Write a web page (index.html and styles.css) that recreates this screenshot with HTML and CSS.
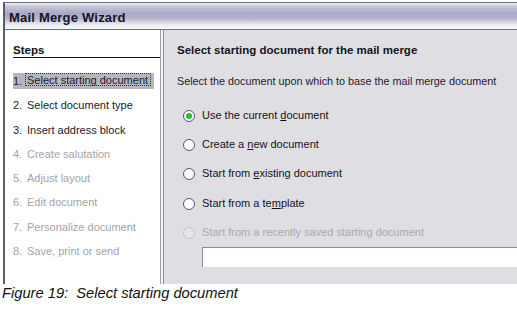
FILE: index.html
```html
<!DOCTYPE html>
<html lang="en">
<head>
  <meta charset="UTF-8">
  <title>Mail Merge Wizard</title>
  <link rel="stylesheet" href="styles.css">
</head>
<body>
  <div class="figure">
    <div class="window">
      <div class="titlebar">Mail Merge Wizard</div>
      <div class="main">
        <div class="steps">
          <div class="steps-title">Steps</div>
          <ul class="step-list">
            <li class="step current"><span class="num">1.</span><span class="label">Select starting document</span></li>
            <li class="step"><span class="num">2.</span><span class="label">Select document type</span></li>
            <li class="step"><span class="num">3.</span><span class="label">Insert address block</span></li>
            <li class="step disabled"><span class="num">4.</span><span class="label">Create salutation</span></li>
            <li class="step disabled"><span class="num">5.</span><span class="label">Adjust layout</span></li>
            <li class="step disabled"><span class="num">6.</span><span class="label">Edit document</span></li>
            <li class="step disabled"><span class="num">7.</span><span class="label">Personalize document</span></li>
            <li class="step disabled"><span class="num">8.</span><span class="label">Save, print or send</span></li>
          </ul>
        </div>
        <div class="divider"></div>
        <div class="content">
          <h2>Select starting document for the mail merge</h2>
          <p class="intro">Select the document upon which to base the mail merge document</p>
          <div class="options">
            <div class="option"><span class="radio checked"></span><span>Use the current <u>d</u>ocument</span></div>
            <div class="option"><span class="radio"></span><span>Create a <u>n</u>ew document</span></div>
            <div class="option"><span class="radio"></span><span>Start from <u>e</u>xisting document</span></div>
            <div class="option"><span class="radio"></span><span>Start from a te<u>m</u>plate</span></div>
            <div class="option disabled"><span class="radio"></span><span>Start from a recently saved starting document</span></div>
            <div class="field"></div>
          </div>
        </div>
      </div>
    </div>
    <div class="caption">Figure 19:&nbsp; Select starting document</div>
  </div>
</body>
</html>
```

FILE: styles.css
```css
body {
  margin: 0;
  background: #fff;
  font-family: "Liberation Sans", Arial, sans-serif;
  color: #111;
  overflow: hidden;
}
.figure {
  padding-top: 2px;
  padding-left: 3px;
}
.window {
  width: 530px;
  height: 282px;
  border-top: 1px solid #6e6d7e;
  border-left: 2px solid #5c5b6e;
  display: flex;
  flex-direction: column;
  box-sizing: border-box;
}
.titlebar {
  height: 27px;
  box-sizing: border-box;
  padding: 7px 0 0 4px;
  font-size: 13px;
  font-weight: bold;
  letter-spacing: 0.2px;
  color: #141428;
  background: linear-gradient(#eeeef3 0%, #c4c3d6 15%, #aaa9c4 40%, #b5b4cb 60%, #e8eaee 82%, #fafafa 100%);
  border-bottom: 1px solid #6d6c80;
}
.main {
  flex: 1;
  display: flex;
}
.steps {
  width: 155px;
  background: #fff;
  padding: 14px 0 0 8px;
  box-sizing: border-box;
}
.steps-title {
  font-size: 11.5px;
  font-weight: bold;
  color: #111;
  border-bottom: 1px solid #111;
  padding-bottom: 1px;
  margin-right: -6px;
}
.step-list {
  list-style: none;
  margin: 15px 0 0;
  padding: 0;
}
.step {
  font-size: 11px;
  height: 24.3px;
  display: flex;
  align-items: flex-start;
  color: #1a1a30;
}
.step .num {
  width: 14px;
  padding-top: 2px;
}
.step .label {
  padding-top: 2px;
}
.step.current {
  background: #b7b6be;
  height: 16px;
  width: 141px;
  margin-bottom: 8.3px;
}
.step.current .label {
  border: 1px dotted #333;
  padding: 1px 2px 0 1px;
  margin-left: -2px;
  height: 13px;
  box-sizing: border-box;
  line-height: 11px;
}
.step.disabled {
  color: #a3a3a9;
}
.divider {
  width: 4px;
  border-left: 1px solid #a09fa8;
  border-right: 1px solid #8e8d98;
  background: #f4f4f6;
  box-sizing: border-box;
}
.content {
  flex: 1;
  background: #dfdee3;
  padding: 14px 0 0 13px;
}
.content h2 {
  margin: 0;
  font-size: 11.5px;
  font-weight: bold;
  color: #151520;
}
.intro {
  margin: 19px 0 0;
  font-size: 10.8px;
  color: #1f1a30;
}
.options {
  margin-top: 22px;
  padding-left: 6px;
}
.option {
  font-size: 11px;
  height: 29.2px;
  display: flex;
  align-items: flex-start;
  color: #141420;
}
.radio {
  width: 10px;
  height: 10px;
  border: 1px solid #4b5a6e;
  border-radius: 50%;
  background: #fff;
  margin-right: 7px;
  margin-top: 1px;
  position: relative;
}
.radio.checked::after {
  content: "";
  position: absolute;
  left: 2px;
  top: 2px;
  width: 6px;
  height: 6px;
  border-radius: 50%;
  background: #3fb03a;
}
.option.disabled {
  color: #a9a9ae;
  height: 21px;
}
.option.disabled .radio {
  border-color: #c2c2c8;
  background: #e6e6ea;
}
.field {
  margin-left: 19px;
  height: 19px;
  background: #fff;
  border-top: 1px solid #7f8fa6;
  border-left: 1px solid #7f8fa6;
}
.caption {
  font-style: italic;
  font-size: 14.7px;
  color: #111;
  margin: 1px 0 0 -1px;
}
```
